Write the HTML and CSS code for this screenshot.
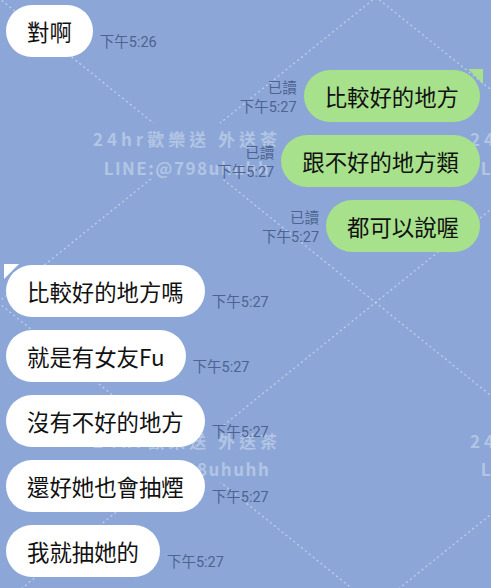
FILE: index.html
```html
<!DOCTYPE html>
<html lang="zh-Hant">
<head>
  <meta charset="UTF-8" />
  <meta name="viewport" content="width=device-width, initial-scale=1" />
  <title>聊天</title>
  <link rel="stylesheet" href="styles.css">
</head>
<body>

<div class="chat">
  <!-- background watermark -->
  <svg class="watermark" width="491" height="588" viewBox="0 0 491 588">
    <defs>
      <mask id="holes">
        <rect x="0" y="0" width="491" height="588" fill="#fff" />
        <ellipse cx="187" cy="152" rx="48" ry="40" fill="#000" />
        <ellipse cx="187" cy="454" rx="48" ry="40" fill="#000" />
      </mask>
    </defs>
    <g class="wm-lines" mask="url(#holes)">
      <line x1="-10" y1="-314" x2="500" y2="97" />
      <line x1="-10" y1="-9" x2="500" y2="403" />
      <line x1="-10" y1="296" x2="500" y2="708" />
      <line x1="-10" y1="309" x2="500" y2="-103" />
      <line x1="-10" y1="614" x2="500" y2="202" />
      <line x1="-10" y1="919" x2="500" y2="507" />
    </g>
    <g class="wm-text">
      <text x="187" y="146" class="wm-1">24hr歡樂送 外送茶</text>
      <text x="187" y="175" class="wm-2">LINE:@798uhuhh</text>
      <text x="187" y="448" class="wm-1">24hr歡樂送 外送茶</text>
      <text x="187" y="476" class="wm-2">LINE:@798uhuhh</text>
      <text x="564" y="146" class="wm-1">24hr歡樂送 外送茶</text>
      <text x="564" y="175" class="wm-2">LINE:@798uhuhh</text>
      <text x="564" y="448" class="wm-1">24hr歡樂送 外送茶</text>
      <text x="564" y="476" class="wm-2">LINE:@798uhuhh</text>
    </g>
  </svg>

  <div class="row left">
    <div class="bubble">對啊</div>
    <div class="meta"><span>下午5:26</span></div>
  </div>

  <div class="row right">
    <div class="meta"><span>已讀</span><span>下午5:27</span></div>
    <div class="bubble mine tail">比較好的地方</div>
  </div>

  <div class="row right">
    <div class="meta"><span>已讀</span><span>下午5:27</span></div>
    <div class="bubble mine">跟不好的地方類</div>
  </div>

  <div class="row right">
    <div class="meta"><span>已讀</span><span>下午5:27</span></div>
    <div class="bubble mine">都可以說喔</div>
  </div>

  <div class="row left">
    <div class="bubble tail">比較好的地方嗎</div>
    <div class="meta"><span>下午5:27</span></div>
  </div>

  <div class="row left">
    <div class="bubble">就是有女友Fu</div>
    <div class="meta"><span>下午5:27</span></div>
  </div>

  <div class="row left">
    <div class="bubble">沒有不好的地方</div>
    <div class="meta"><span>下午5:27</span></div>
  </div>

  <div class="row left">
    <div class="bubble">還好她也會抽煙</div>
    <div class="meta"><span>下午5:27</span></div>
  </div>

  <div class="row left">
    <div class="bubble">我就抽她的</div>
    <div class="meta"><span>下午5:27</span></div>
  </div>
</div>

</body>
</html>
```

FILE: styles.css
```css
* { box-sizing: border-box; }

body {
  margin: 0;
  width: 491px;
  height: 588px;
  overflow: hidden;
  background: #8ca7d7;
  font-family: "Noto Sans CJK TC", "Noto Sans", sans-serif;
}

.chat {
  position: relative;
  height: 588px;
  padding-top: 5px;
  display: flex;
  flex-direction: column;
  gap: 13px;
}

.watermark {
  position: absolute;
  left: 0;
  top: 0;
}

.wm-lines line {
  stroke: rgba(255, 255, 255, 0.45);
  stroke-width: 1.3;
  stroke-dasharray: 2 3;
}

.wm-text text {
  fill: rgba(255, 255, 255, 0.34);
  font-weight: 700;
  font-size: 17px;
  text-anchor: middle;
}

.wm-1 { letter-spacing: 4px; }
.wm-2 { letter-spacing: 1.5px; }

.row {
  position: relative;
  display: flex;
  align-items: flex-end;
  gap: 7px;
}

.row.left { padding-left: 6px; }

.row.right {
  justify-content: flex-end;
  padding-right: 11px;
}

.bubble {
  position: relative;
  height: 52px;
  line-height: 52px;
  padding: 0 21px;
  border-radius: 26px;
  background: #fff;
  color: #111;
  font-size: 22.4px;
  white-space: nowrap;
}

.bubble.mine { background: #a7e18b; }

.left .bubble.tail::before {
  content: "";
  position: absolute;
  left: -2px;
  top: -1px;
  border-top: 15px solid #fff;
  border-right: 15px solid transparent;
}

.right .bubble.tail::before {
  content: "";
  position: absolute;
  right: -3px;
  top: -1px;
  border-top: 15px solid #a7e18b;
  border-left: 15px solid transparent;
}

.meta {
  display: flex;
  flex-direction: column;
  padding-bottom: 5px;
  font-family: "Noto Sans CJK TC", Roboto, sans-serif;
  font-size: 14.5px;
  line-height: 19px;
  color: #4d6390;
  white-space: nowrap;
}

.meta span { font-family: Roboto, "Noto Sans CJK TC", sans-serif; }

.right .meta { align-items: flex-end; }
.left .meta { align-items: flex-start; }
```
